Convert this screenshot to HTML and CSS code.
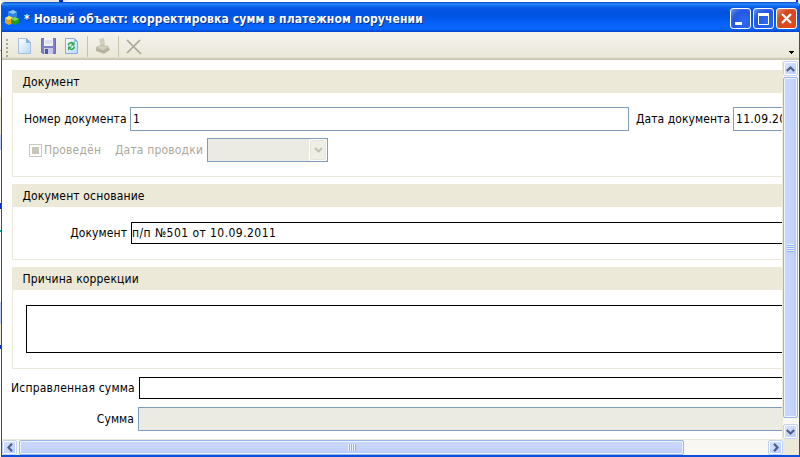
FILE: index.html
```html
<!DOCTYPE html>
<html lang="ru">
<head>
<meta charset="utf-8">
<title>Новый объект</title>
<link rel="stylesheet" href="styles.css">
</head>
<body>
<div class="desktop">
<div class="strip"></div>
<main class="window">
  <header class="titlebar">
    <svg class="app-icon" width="16" height="16" viewBox="0 0 16 16">
      <path d="M3 2l5-2 4 2v5l-4 2-5-2z" fill="#2e86e0"/><path d="M3 2l5-2 4 2-4 2z" fill="#8cc8fa"/>
      <path d="M0 8l4-2 4 2v5l-4 2-4-2z" fill="#e8a414"/><path d="M0 8l4-2 4 2-4 2z" fill="#ffe46a"/>
      <path d="M6 9l4-2 4 2v4l-4 2-4-2z" fill="#219a2c"/><path d="M6 9l4-2 4 2-4 2z" fill="#79d85c"/>
    </svg>
    <h1>* Новый объект: корректировка сумм в платежном поручении</h1>
    <div class="controls">
      <span class="ctl"><svg width="17" height="17"><path d="M3 12h7v3H3z" fill="#fff"/></svg></span>
      <span class="ctl"><svg width="17" height="17"><path d="M3.500 4v10.500h10V4" fill="none" stroke="#fff"/><path d="M3 3h11v3H3z" fill="#fff"/></svg></span>
      <span class="ctl close"><svg width="17" height="17"><path d="M4 4l9 9M13 4l-9 9" stroke="#fff" stroke-width="2.300"/></svg></span>
    </div>
  </header>
  <nav class="toolbar">
    <svg class="grip" width="3" height="20"><path d="M1 1v19" stroke="#aaa79b" stroke-width="2" stroke-dasharray="2 2"/></svg>
    <svg class="tool t-new" width="14" height="17"><defs><linearGradient id="pg" x2="1" y2="1"><stop stop-color="#fff"/><stop offset="1" stop-color="#b5d8f7"/></linearGradient></defs><path d="M.5.5h8l4 4v11H.5z" fill="url(#pg)" stroke="#a5bfdf"/><path d="M8.500.5v4h4z" fill="#7fb5e8" stroke="#88b2df"/></svg>
    <svg class="tool t-save" width="16" height="17"><path d="M.5.5h14v15h-13l-1-1z" fill="#7e80ca" stroke="#6c6dbb"/><path d="M3 0h9v8H3z" fill="#f2f2fa"/><path d="M4 3h7M4 5h7" stroke="#c9cbe4"/><path d="M3 10h9v6H3z" fill="#c7c9e4"/><path d="M4 11h3v5H4z" fill="#5557a0"/></svg>
    <svg class="tool t-ref" width="14" height="17"><path d="M.5.5h9l3 3v12H.5z" fill="url(#pg)" stroke="#8caade"/><path d="M9.500.5v3h3z" fill="#6fa2e3"/><path d="M3.500 7.500V6q2.500-2.500 4.500-.5M9 8.500V10q-2.500 2.500-4.500.5" fill="none" stroke="#2aa648" stroke-width="1.500"/><path d="M9.500 3.500v4h-4zM3 12.500v-4h4z" fill="#2aa648"/></svg>
    <i class="sep s1"></i>
    <svg class="tool t-print" width="17" height="17"><path d="M4 1l5-1 1 7-4 2z" fill="#d0cdbd"/><path d="M1 9l5-2 7 1 2 4-6 4-8-3z" fill="#bebaa9"/><path d="M2 9l5-1 6 1-5 3z" fill="#d5d2c3"/><path d="M2 12l7 2 5-3" fill="none" stroke="#aca895"/></svg>
    <i class="sep s2"></i>
    <svg class="tool t-del" width="16" height="16"><path d="M1 1l14 14M14 1L1 14" stroke="#aaa799" stroke-width="1.700"/></svg>
    <svg class="more" width="5" height="3" shape-rendering="crispEdges"><path d="M0 0h5v1H4v1H3v1H2V2H1V1H0z"/></svg>
  </nav>
  <div class="work">
    <section class="form">
      <fieldset class="group g1">
        <h2>Документ</h2>
        <div class="row r1"><label class="w103">Номер документа</label><span class="field num">1</span><label class="w94">Дата документа</label><span class="field date">11.09.2011</span></div>
        <div class="row r2"><span class="check"></span><label class="w58">Проведён</label><label class="w88">Дата проводки</label><span class="field combo"><span class="arrow"><svg width="9" height="6"><path d="M1 1l3.500 3.500L8 1" fill="none" stroke="#c3c2b5" stroke-width="2"/></svg></span></span></div>
      </fieldset>
      <fieldset class="group g2">
        <h2>Документ основание</h2>
        <div class="row"><label>Документ</label><span class="field basis">п/п №501 от 10.09.2011</span></div>
      </fieldset>
      <fieldset class="group g3">
        <h2>Причина коррекции</h2>
        <div class="area"></div>
      </fieldset>
      <div class="row sum1"><label>Исправленная сумма</label><span class="field"></span></div>
      <div class="row sum2"><label>Сумма</label><span class="field"></span></div>
    </section>
    <div class="vbar">
      <span class="sbtn"><svg width="9" height="6"><path d="M.8 5l3.700-3.500L8.200 5" fill="none" stroke="#4d6185" stroke-width="2.200"/></svg></span>
      <span class="thumb"><i></i></span>
      <span class="sbtn"><svg width="9" height="6"><path d="M.8 1l3.700 3.500L8.200 1" fill="none" stroke="#4d6185" stroke-width="2.200"/></svg></span>
    </div>
    <div class="hbar">
      <span class="sbtn"><svg width="6" height="9"><path d="M5 .8L1.500 4.500 5 8.200" fill="none" stroke="#4d6185" stroke-width="2.200"/></svg></span>
      <span class="thumb"><i></i></span>
      <span class="sbtn"><svg width="6" height="9"><path d="M1 .8l3.500 3.700L1 8.200" fill="none" stroke="#4d6185" stroke-width="2.200"/></svg></span>
    </div>
    <div class="corner"></div>
  </div>
</main>
</div>
</body>
</html>
```
FILE: styles.css
```css
* { box-sizing: border-box; }
body { margin: 0; width: 800px; height: 457px; overflow: hidden; font: 12px/16px "DejaVu Sans Condensed", "DejaVu Sans", sans-serif; font-stretch: condensed; letter-spacing: .07px; color: #000; }
h1, h2 { margin: 0; font-size: inherit; font-weight: normal; }
svg { display: block; }
.desktop { height: 457px; padding-left: 1px; background: linear-gradient(#fff, #fff 50px, #a9a99c 50px, #a9a99c 51px, #fff 51px, #fff 97px, #ece9d8 97px, #ece9d8 135px, #bcd0f5 135px, #bcd0f5 150px, #fff 150px, #fff 203px, #0831c0 203px, #0831c0 209px, #fff 209px, #fff 230px, #00a6a6 230px, #00a6a6 232px, #fff 232px, #fff 302px, #bcd0f5 302px, #bcd0f5 324px, #ece9d8 324px, #ece9d8 345px, #0831c0 345px, #0831c0 349px, #fff 349px); }
.strip { height: 2px; background: linear-gradient(90deg, #e9e8df 58px, #0831c0 58px, #0831c0 62px, #e9e8df 62px, #fff 73px, #fff 795px, #0831c0 795px, #0831c0 797px, #e9e8df 797px); }
.window { height: 455px; border: solid #0a50dc; border-width: 0 1px 2px; background: #fff; border-radius: 4px 4px 0 0; overflow: hidden; }
.titlebar { height: 30px; display: flex; align-items: center; padding: 4px 2px 0 3px; color: #fff; background: linear-gradient(#0644c8, #2b8bff 2px, #1068f0 4px, #0455e3 7px, #0054e3 14px, #0661fa 21px, #0667ff 27px, #0450d8 29px, #003dc2); }
.app-icon { margin-top: -2px; }
.titlebar h1 { margin-left: 3px; font-weight: bold; letter-spacing: .13px; white-space: nowrap; text-shadow: 1px 1px #0b2d85; }
.controls { display: flex; gap: 2px; margin: -1px 0 0 auto; }
.ctl { width: 21px; height: 21px; border: 1px solid #fff; border-radius: 3px; padding: 1px; background: radial-gradient(circle at 70% 70%, #2a6cf4, #2456e2 60%, #6c96f3); }
.close { background: radial-gradient(circle at 70% 70%, #e64b1c, #d6471f 60%, #ec987c); }
.toolbar { height: 28px; display: flex; align-items: flex-start; padding: 6px 6px 0 5px; background: linear-gradient(#f3f3ee, #ebe8d8 25px, #c9c5b2 27px); }
.grip { margin-left: -1px; }
.t-new { margin-left: 9px; }
.t-save { margin-left: 9px; }
.t-ref { margin-left: 8px; }
.sep { width: 1px; height: 21px; margin-top: -2px; background: #c5c2b0; }
.s1 { margin-left: 8px; }
.t-print { margin-left: 7px; }
.s2 { margin-left: 6px; }
.t-del { margin-left: 7px; margin-top: 1px; }
.more { margin: 13px -1px 0 auto; }
.work { height: 395px; padding-top: 1px; display: grid; grid-template: 378px 16px / 781px 16px; }
.form { overflow: hidden; padding: 9px 0 0 9px; border-right: 1px solid #ece9d8; }
.form > * { width: 820px; }
.group { margin: 0 0 7px 1px; padding: 0; border: 1px solid #ece9d8; border-top: 0; min-width: 0; }
.group h2 { height: 23px; margin-left: -1px; padding: 4px 0 0 10.500px; letter-spacing: .15px; background: #ece9d8; }
.g1 { height: 107px; }
.g2 { height: 76px; }
.g3 { height: 102px; }
.row { display: flex; align-items: center; }
label { white-space: nowrap; flex: none; }
.field { height: 24px; border: 1px solid #7f9db9; background: #fff; padding: 3px 2px; flex: none; white-space: nowrap; }
.r1 { margin: 14px 0 0 11px; }
.w103 { width: 106px; }
.num { width: 499px; }
.w94 { margin-left: 7px; width: 97px; }
.date { width: 100px; letter-spacing: .3px; }
.r2 { margin: 7px 0 0 16px; color: #aca899; }
.r2 label { letter-spacing: .17px; }
.check { width: 13px; height: 13px; border: 1px solid #c9c7ba; background: #c9c7ba content-box; padding: 2px; }
.w58 { width: 71px; margin-left: 2px; }
.w88 { width: 92px; }
.combo { width: 121px; background: #ebebe4; padding: 1px; }
.arrow { display: grid; place-items: center; width: 16px; height: 20px; margin-left: auto; border: 1px solid #e5e3da; background: #f0efe6; border-radius: 2px; box-shadow: 0 0 0 1px #fff; }
.g2 .row { margin-top: 15px; }
.g2 label { width: 114px; text-align: right; }
.basis { width: 680px; height: 22px; margin-left: 4px; border-color: #000; padding: 2px 0; letter-spacing: .44px; }
.area { height: 48px; margin: 15px 0 0 13px; border: 1px solid #000; }
.sum1 { height: 22px; margin-top: 8px; }
.sum1 label, .sum2 label { width: 123px; text-align: right; }
.sum1 label { letter-spacing: .2px; }
.sum1 .field { width: 680px; height: 22px; margin-left: 5px; border-color: #000; }
.sum2 { margin-top: 8px; }
.sum2 .field { width: 680px; margin-left: 4px; background: #ebebe4; }
.vbar, .hbar { display: flex; background: #f8f7f1; }
.vbar { flex-direction: column; padding: 0 1px 0 0; }
.hbar { border-top: 1px solid #ece9d8; }
.sbtn { display: grid; place-items: center; flex: none; width: 15px; height: 15px; border: 1px solid #c3d3f7; border-radius: 2px; box-shadow: inset 0 0 0 1px #fff; background: linear-gradient(135deg, #d8e4ff, #b8ccfa); }
.thumb { display: grid; place-items: center; border: 1px solid #98b4e8; border-radius: 2px; box-shadow: inset 0 0 0 1px #eef4ff; background: linear-gradient(90deg, #c9d8fd, #c5d3fc 60%, #b6cbf8); }
.vbar .thumb { height: 341px; margin: 1px 0 6px; }
.hbar .thumb { width: 665px; margin: 0 auto 0 2px; background: linear-gradient(#c9d8fd, #c5d3fc 60%, #b6cbf8); }
.vbar .thumb i { width: 7px; height: 8px; background: repeating-linear-gradient(#eef4fe 0 1px, #8cb0f8 1px 2px); }
.hbar .thumb i { width: 8px; height: 7px; background: repeating-linear-gradient(90deg, #eef4fe 0 1px, #8cb0f8 1px 2px); }
.corner { background: #ece9d8; }
```
